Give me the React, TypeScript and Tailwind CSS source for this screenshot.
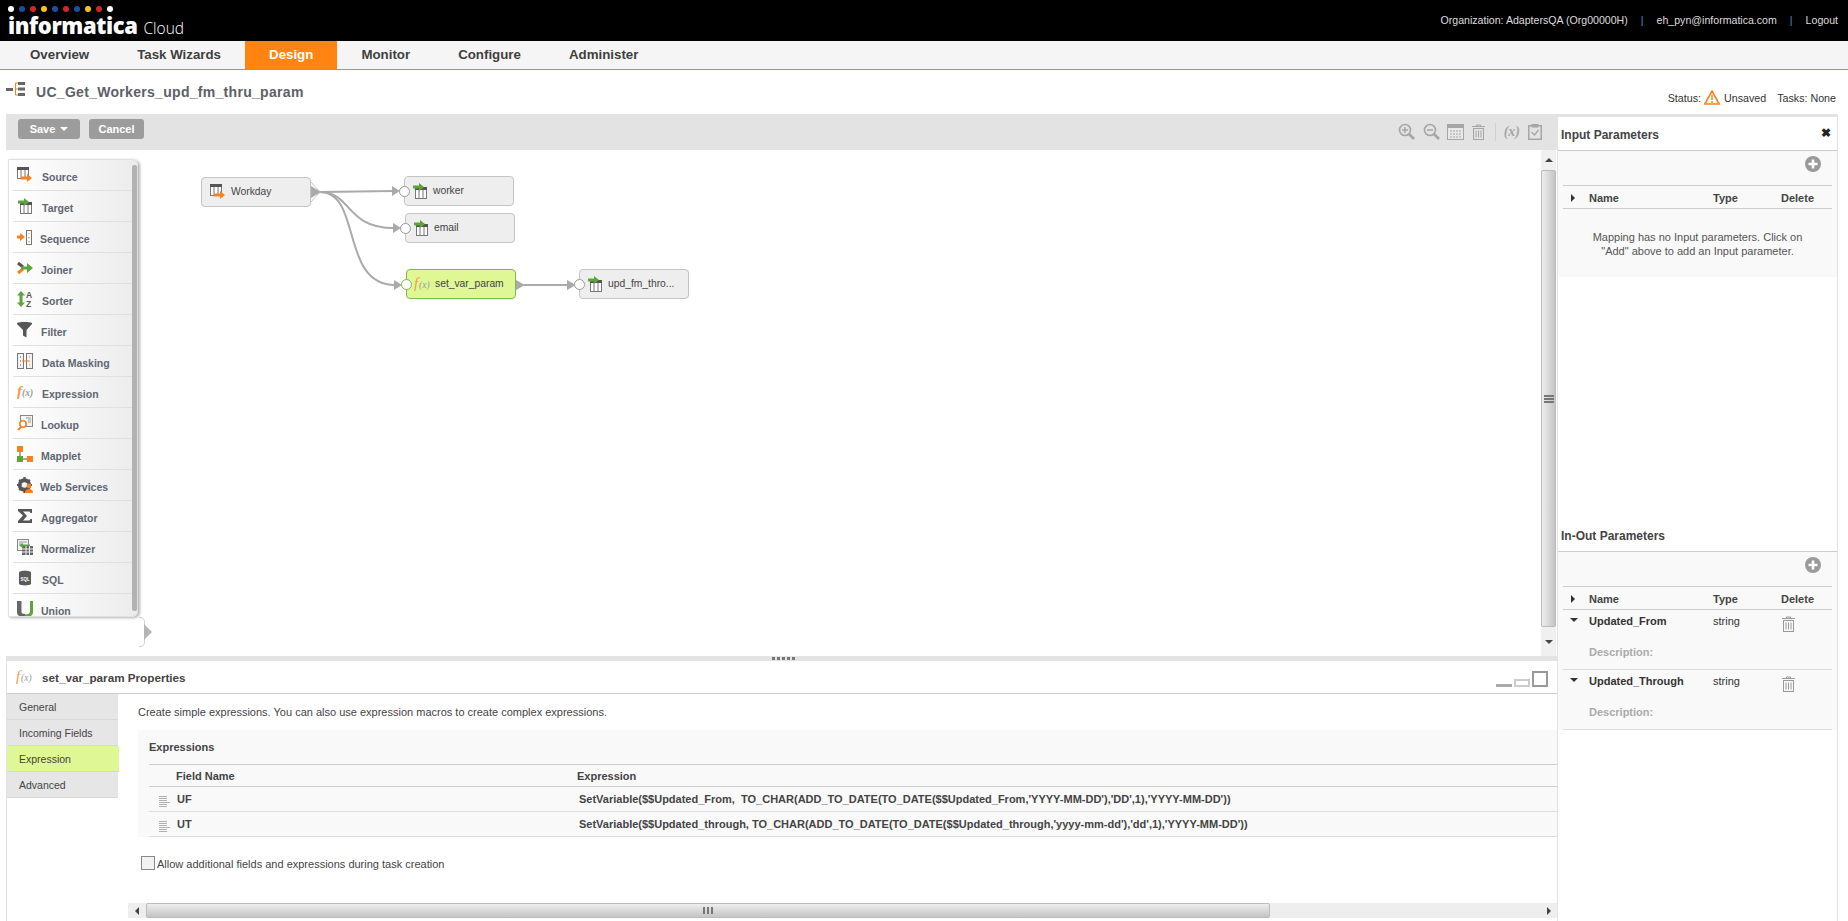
import type { ReactNode } from 'react';

const ORANGE = '#f58220';
const GREEN = '#5da53a';

function TableGrid({ x = 0, y = 0 }: { x?: number; y?: number }) {
  return (
    <g transform={`translate(${x} ${y})`}>
      <rect x="0.5" y="0.5" width="11" height="11" fill="#fff" stroke="#777" />
      <rect x="0" y="0" width="12" height="3" fill="#555" />
      <path d="M4 3v8M8 3v8" stroke="#777" />
    </g>
  );
}

function Arrow({ x, y, color, w = 10 }: { x: number; y: number; color: string; w?: number }) {
  return <path d={`M${x} ${y - 1.5}h${w - 5}v-2.5l5 4-5 4v-2.5h-${w - 5}z`} fill={color} />;
}

function SourceIcon() {
  return (
    <svg width="16" height="16" viewBox="0 0 16 16">
      <TableGrid />
      <Arrow x={4} y={11} color={ORANGE} w={11} />
    </svg>
  );
}

function TargetIcon() {
  return (
    <svg width="16" height="16" viewBox="0 0 16 16">
      <TableGrid x={3} y={4} />
      <Arrow x={1} y={4} color={GREEN} w={11} />
    </svg>
  );
}

function FxIcon({ size = 16 }: { size?: number }) {
  return (
    <svg width={size} height={size} viewBox="0 0 16 16">
      <text x="0" y="12" fontFamily="Liberation Serif, serif" fontStyle="italic" fontSize="15" fill="#f39a4a">f</text>
      <text x="5" y="11.5" fontFamily="Liberation Serif, serif" fontStyle="italic" fontSize="9.5" fill="#999">(x)</text>
    </svg>
  );
}

const paletteItems: { label: string; textLeft: string; icon: ReactNode }[] = [
  { label: 'Source', textLeft: 'ml-[9px]', icon: <SourceIcon /> },
  { label: 'Target', textLeft: 'ml-[9px]', icon: <TargetIcon /> },
  {
    label: 'Sequence',
    textLeft: 'ml-[7px]',
    icon: (
      <svg width="16" height="16" viewBox="0 0 16 16">
        <Arrow x={0} y={8} color={ORANGE} w={8} />
        <rect x="9.5" y="1.5" width="5" height="14" fill="#fff" stroke="#777" />
        <path d="M12 4v1M12 8v1.5M12 12v1.5" stroke={ORANGE} />
      </svg>
    ),
  },
  {
    label: 'Joiner',
    textLeft: 'ml-[8px]',
    icon: (
      <svg width="16" height="16" viewBox="0 0 16 16">
        <path d="M1 3l5 4" stroke="#555" strokeWidth="3" />
        <path d="M1 13l5-4" stroke={ORANGE} strokeWidth="3" />
        <path d="M4 6.500h6V3l6 5-6 5V9.500H4z" fill={GREEN} />
      </svg>
    ),
  },
  {
    label: 'Sorter',
    textLeft: 'ml-[9px]',
    icon: (
      <svg width="16" height="16" viewBox="0 0 16 16">
        <path d="M4 0l4 4.500H5.500v7H8L4 16 0 11.500h2.500v-7H0z" fill={GREEN} />
        <text x="9" y="7" fontFamily="Liberation Sans, sans-serif" fontWeight="700" fontSize="8.500" fill="#555">A</text>
        <text x="9" y="15.500" fontFamily="Liberation Sans, sans-serif" fontWeight="700" fontSize="8.500" fill="#555">Z</text>
      </svg>
    ),
  },
  {
    label: 'Filter',
    textLeft: 'ml-[8px]',
    icon: (
      <svg width="16" height="16" viewBox="0 0 16 16">
        <path d="M0 1c3-1.300 12-1.300 15 0v1L9.500 8v7.500L6 13.500V8L0 2z" fill="#555" />
      </svg>
    ),
  },
  {
    label: 'Data Masking',
    textLeft: 'ml-[9px]',
    icon: (
      <svg width="16" height="16" viewBox="0 0 16 16">
        <rect x="0.5" y="0.5" width="6" height="15" fill="#f2f2f2" stroke="#777" />
        <rect x="9.5" y="0.5" width="6" height="15" fill="#f2f2f2" stroke="#777" />
        <path d="M3 4h1M3 8h1M3 12h1" stroke="#555" />
        <path d="M12 4h1M12 12h1" stroke={ORANGE} />
        <path d="M5 8h8" stroke={ORANGE} />
      </svg>
    ),
  },
  { label: 'Expression', textLeft: 'ml-[9px]', icon: <FxIcon /> },
  {
    label: 'Lookup',
    textLeft: 'ml-[8px]',
    icon: (
      <svg width="16" height="16" viewBox="0 0 16 16">
        <rect x="3.5" y="0.5" width="12" height="11" fill="#f4f4f4" stroke="#888" />
        <path d="M9 3h5M11 5h3M11 7h3" stroke="#999" />
        <circle cx="6" cy="9" r="3.2" fill="#fff" stroke={ORANGE} strokeWidth="1.6" />
        <path d="M4 12l-3 3" stroke={ORANGE} strokeWidth="2" />
      </svg>
    ),
  },
  {
    label: 'Mapplet',
    textLeft: 'ml-[8px]',
    icon: (
      <svg width="16" height="16" viewBox="0 0 16 16">
        <path d="M3 5v8h8" stroke="#555" fill="none" />
        <rect x="0" y="0" width="6" height="6" fill={ORANGE} />
        <rect x="0" y="10" width="6" height="6" fill={GREEN} />
        <rect x="10" y="10" width="6" height="6" fill={ORANGE} />
      </svg>
    ),
  },
  {
    label: 'Web Services',
    textLeft: 'ml-[7px]',
    icon: (
      <svg width="16" height="16" viewBox="0 0 16 16">
        <circle cx="7.5" cy="8" r="5" fill="none" stroke="#555" strokeWidth="3.4" />
        <path d="M7.5 0v16M0 8h15M2.2 2.700l10.600 10.600M12.800 2.700L2.200 13.300" stroke="#555" strokeWidth="2.2" />
        <circle cx="7.500" cy="8" r="2.800" fill="#f4f4f4" />
        <circle cx="12" cy="9" r="2.400" fill={ORANGE} />
        <path d="M8 16c0-3 2-4 4-4s4 1 4 4z" fill={ORANGE} />
      </svg>
    ),
  },
  {
    label: 'Aggregator',
    textLeft: 'ml-[8px]',
    icon: (
      <svg width="16" height="16" viewBox="0 0 16 16">
        <path d="M1 1h14v4h-1.500l-1-1.500H6L10 8l-4 4.500h6.500l1-1.500H15v4H1v-2l5-5.500L1 3z" fill="#555" />
      </svg>
    ),
  },
  {
    label: 'Normalizer',
    textLeft: 'ml-[8px]',
    icon: (
      <svg width="16" height="16" viewBox="0 0 16 16">
        <rect x="0.500" y="0.500" width="11" height="11" fill="#f2f2f2" stroke="#888" />
        <path d="M2 3h8M2 5h3" stroke="#999" />
        <rect x="5" y="7" width="11" height="9" fill="#666" />
        <path d="M5 10h11M5 13h11M9 7v9M12.500 7v9" stroke="#eee" />
        <path d="M13 7H6V9L2 6.500 6 4v1.500h7z" fill={GREEN} />
      </svg>
    ),
  },
  {
    label: 'SQL',
    textLeft: 'ml-[9px]',
    icon: (
      <svg width="16" height="16" viewBox="0 0 16 16">
        <path d="M2 2.500c0-2.500 12-2.500 12 0v11c0 2.500-12 2.500-12 0z" fill="#5a5a5a" />
        <text x="3.500" y="10.500" fontFamily="Liberation Sans, sans-serif" fontWeight="700" fontSize="4.500" fill="#fff">SQL</text>
      </svg>
    ),
  },
  {
    label: 'Union',
    textLeft: 'ml-[8px]',
    icon: (
      <svg width="16" height="16" viewBox="0 0 16 16">
        <path d="M0 0h4.500v11c0 1 1 2 3.500 2v3C3 16 0 15 0 11z" fill="#666" />
        <path d="M16 0h-3v11c0 1.500-2 2.500-5 2.500V16c5 0 8-1 8-5z" fill={GREEN} />
      </svg>
    ),
  },
];

function MagnifierIcon({ plus }: { plus?: boolean }) {
  return (
    <svg width="17" height="17" viewBox="0 0 17 17" fill="none" stroke="#a6a6a6">
      <circle cx="7" cy="7" r="5.500" strokeWidth="1.600" />
      <path d="M11 11l5 5" strokeWidth="2.600" />
      <path d={plus ? 'M4 7h6M7 4v6' : 'M4 7h6'} strokeWidth="1.500" />
    </svg>
  );
}

function TrashIcon({ color = '#a6a6a6', w = 13, h = 16 }: { color?: string; w?: number; h?: number }) {
  return (
    <svg width={w} height={h} viewBox="0 0 13 16" fill="none" stroke={color}>
      <path d="M0 2.500h13M4.500 2.500V1h4v1.500" />
      <rect x="1.500" y="4.500" width="10" height="11" />
      <path d="M4 6.500v7M6.500 6.500v7M9 6.500v7" />
    </svg>
  );
}

function PlusCircle() {
  return (
    <svg width="16" height="16" viewBox="0 0 16 16">
      <circle cx="8" cy="8" r="8" fill="#9a9a9a" />
      <path d="M3.500 8h9M8 3.500v9" stroke="#fff" strokeWidth="2.600" />
    </svg>
  );
}

function CaretRight({ color = '#333' }: { color?: string }) {
  return <div className="h-0 w-0 border-y-[4px] border-l-[4px] border-y-transparent" style={{ borderLeftColor: color }} />;
}

function CaretDown() {
  return <div className="h-0 w-0 border-x-[4px] border-t-[4px] border-x-transparent border-t-[#333]" />;
}

function DiagramNode({ pos, children, active }: { pos: string; children: ReactNode; active?: boolean }) {
  return (
    <div
      className={`absolute flex h-[30px] w-[110px] items-center rounded-[4px] border text-[10.300px] text-[#444] ${pos} ${
        active ? 'border-[#7db84e] bg-[#dff794]' : 'border-[#c4c4c4] bg-[#eeeeee]'
      }`}
    >
      {children}
    </div>
  );
}

function InPort({ active }: { active?: boolean }) {
  return (
    <span
      className={`absolute left-[-6px] top-[9px] h-[11px] w-[11px] rounded-full border bg-white ${
        active ? 'border-[#7db84e]' : 'border-[#999]'
      }`}
    />
  );
}

function Diagram() {
  const line = 'fill-none stroke-[#aaaaaa] stroke-2';
  return (
    <>
      <svg className="absolute left-0 top-0" width="1535" height="506" viewBox="6 150 1535 506">
        <path d="M311 182l9 10-9 10" fill="none" stroke="#ccc" />
        <path d="M311 186l10 6-10 6z" fill="#aaa" />
        <path d="M320 192L394 191" className={line} />
        <path d="M320 192C352 192 345 228 394 228" className={line} />
        <path d="M320 192C362 192 340 285 395 285" className={line} />
        <path d="M392 186l8 5-8 5zM393 223l8 5-8 5zM394 280l8 5-8 5z" fill="#aaa" />
        <path d="M516 280l9 5-9 5z" fill="#aaa" />
        <path d="M524 285H570" className={line} />
        <path d="M567 280l9 5-9 5z" fill="#aaa" />
      </svg>
      <DiagramNode pos="left-[195px] top-[27px]">
        <span className="ml-[8px] flex"><SourceIcon /></span>
        <span className="ml-[5px]">Workday</span>
      </DiagramNode>
      <DiagramNode pos="left-[398px] top-[26px]">
        <InPort />
        <span className="ml-[7px] flex"><TargetIcon /></span>
        <span className="ml-[5px]">worker</span>
      </DiagramNode>
      <DiagramNode pos="left-[399px] top-[63px]">
        <InPort />
        <span className="ml-[7px] flex"><TargetIcon /></span>
        <span className="ml-[5px]">email</span>
      </DiagramNode>
      <DiagramNode active pos="left-[400px] top-[119px]">
        <InPort active />
        <span className="ml-[7px] flex"><FxIcon /></span>
        <span className="ml-[5px]">set_var_param</span>
      </DiagramNode>
      <DiagramNode pos="left-[573px] top-[119px]">
        <InPort />
        <span className="ml-[7px] flex"><TargetIcon /></span>
        <span className="ml-[5px]">upd_fm_thro...</span>
      </DiagramNode>
    </>
  );
}

function Palette() {
  return (
    <div className="absolute left-[2px] top-[9px] z-10 h-[458px] w-[130px] overflow-hidden rounded-r-[6px] border border-[#e0e0e0] bg-gradient-to-r from-white to-[#ececec] shadow-[2px_1px_3px_rgba(0,0,0,0.3)]">
      {paletteItems.map((item) => (
        <div key={item.label} className="ml-[4px] mr-[5px] flex h-[31px] shrink-0 items-center border-b border-[#e0e0e0] pl-[4px] text-[10.500px] font-bold text-[#5f6672]">
          {item.icon}
          <span className={`pt-[6px] ${item.textLeft}`}>{item.label}</span>
        </div>
      ))}
      <div className="absolute right-0 top-[5px] h-[446px] w-[5px] rounded-[2px] bg-[#b2b2b2]" />
    </div>
  );
}

function VScrollbar() {
  return (
    <div className="flex h-full w-[15px] flex-col bg-[#f0f0f0]">
      <div className="flex h-[20px] items-center justify-center">
        <div className="h-0 w-0 border-x-[4px] border-b-[4px] border-x-transparent border-b-[#444]" />
      </div>
      <div className="flex h-[457px] flex-col items-center justify-center gap-px rounded-[2px] border border-[#bbbbbb] bg-gradient-to-r from-[#eeeeee] to-[#c4c4c4]">
        <span className="h-[2px] w-[10px] bg-[#777]" />
        <span className="h-[2px] w-[10px] bg-[#777]" />
        <span className="h-[2px] w-[10px] bg-[#777]" />
      </div>
      <div className="flex flex-1 items-center justify-center">
        <div className="h-0 w-0 border-x-[4px] border-t-[4px] border-x-transparent border-t-[#444]" />
      </div>
    </div>
  );
}

function Canvas() {
  return (
    <div className="relative flex h-[506px] justify-end bg-white">
      <Diagram />
      <Palette />
      <div className="absolute left-[133px] top-[467px] h-[30px] w-[6px] rounded-r-[5px] border-y border-r border-[#d0d0d0] bg-white" />
      <div className="absolute left-[138px] top-[474px] h-0 w-0 border-y-[8px] border-l-[8px] border-y-transparent border-l-[#b5b5b5]" />
      <div className="mr-px h-full">
        <VScrollbar />
      </div>
    </div>
  );
}

function Toolbar() {
  return (
    <div className="flex h-[36px] items-start justify-between bg-[#e3e3e3] pl-[12px] pt-[5px]">
      <div className="flex gap-[9px]">
        <button className="flex h-[20px] w-[62px] items-center justify-center gap-[5px] rounded-[3px] bg-[#9c9c9c] text-[11px] font-bold text-white">
          Save
          <span className="h-0 w-0 border-x-[4px] border-t-[4px] border-x-transparent border-t-white" />
        </button>
        <button className="h-[20px] w-[55px] rounded-[3px] bg-[#9c9c9c] text-[11px] font-bold text-white">Cancel</button>
      </div>
      <div className="flex items-center pr-[15px] pt-[2px]">
        <MagnifierIcon plus />
        <span className="ml-[8px] flex"><MagnifierIcon /></span>
        <svg className="ml-[7px]" width="17" height="16" viewBox="0 0 17 16">
          <rect x="0.500" y="0.500" width="16" height="15" fill="#e8e8e8" stroke="#a6a6a6" />
          <rect x="0" y="0" width="17" height="4" fill="#a6a6a6" />
          <path d="M3 7h11M3 10h11M3 13h11" stroke="#a6a6a6" strokeDasharray="2 1" />
        </svg>
        <span className="ml-[8px] flex"><TrashIcon /></span>
        <span className="ml-[10px] h-[18px] w-px bg-[#cfcfcf]" />
        <span className="ml-[8px] font-['Liberation_Serif',serif] text-[14px] font-bold italic text-[#a6a6a6]">(x)</span>
        <svg className="ml-[8px]" width="14" height="16" viewBox="0 0 14 16" fill="none" stroke="#a6a6a6">
          <rect x="0.750" y="1.750" width="12.500" height="13.500" strokeWidth="1.500" />
          <rect x="4" y="0" width="6" height="3" fill="#a6a6a6" />
          <path d="M3.500 8l3 3 4-5" strokeWidth="1.300" />
        </svg>
      </div>
    </div>
  );
}

const propertyTabs = ['General', 'Incoming Fields', 'Expression', 'Advanced'];

const expressionRows = [
  {
    field: 'UF',
    expr: "SetVariable($$Updated_From,  TO_CHAR(ADD_TO_DATE(TO_DATE($$Updated_From,'YYYY-MM-DD'),'DD',1),'YYYY-MM-DD'))",
  },
  {
    field: 'UT',
    expr: "SetVariable($$Updated_through, TO_CHAR(ADD_TO_DATE(TO_DATE($$Updated_through,'yyyy-mm-dd'),'dd',1),'YYYY-MM-DD'))",
  },
];

function DragHandle() {
  return (
    <svg width="11" height="11" viewBox="0 0 11 11" stroke="#b0b0b0">
      <path d="M0 .500h8M0 2.500h8M0 4.500h8M0 6.500h11M0 8.500h8M0 10.500h8" />
    </svg>
  );
}

function Properties() {
  return (
    <div className="flex min-h-0 flex-1 flex-col border-l border-[#e3e3e3]">
      <div className="flex h-[33px] shrink-0 items-center border-b border-[#cccccc] pl-[9px] pr-[9px]">
        <FxIcon />
        <span className="ml-[10px] pt-[2px] text-[11.700px] font-bold text-[#444]">set_var_param Properties</span>
        <div className="ml-auto flex items-end gap-[2px] pt-[4px]">
          <span className="h-[3px] w-[16px] bg-[#aaaaaa]" />
          <span className="h-[8px] w-[16px] border-2 border-[#cccccc]" />
          <span className="h-[16px] w-[16px] border-2 border-[#999999]" />
        </div>
      </div>
      <div className="flex min-h-0 flex-1">
        <div className="w-[111px] shrink-0">
          {propertyTabs.map((tab) => (
            <div
              key={tab}
              className={`flex h-[26px] items-center border-b border-[#d8d8d8] pl-[12px] pt-[3px] text-[10.500px] text-[#444] ${
                tab === 'Expression' ? 'mr-[-1px] bg-[#dff794]' : 'bg-[#e6e6e6]'
              }`}
            >
              {tab}
            </div>
          ))}
        </div>
        <div className="flex min-w-0 flex-1 flex-col">
          <div className="pl-[20px]">
            <p className="mt-[11px] text-[11px] leading-[14px] text-[#444]">
              Create simple expressions. You can also use expression macros to create complex expressions.
            </p>
            <div className="mt-[11px] h-[107px] bg-[#f9f9f9] pl-[11px]">
              <div className="flex h-[34px] items-center text-[11px] font-bold text-[#444]">Expressions</div>
              <div className="flex h-[23px] items-center border-y border-[#cccccc] pt-[2px] text-[11px] font-bold text-[#444]">
                <span className="ml-[27px] w-[401px]">Field Name</span>
                <span>Expression</span>
              </div>
              {expressionRows.map((row) => (
                <div key={row.field} className="flex h-[25px] items-center border-b border-[#dddddd] pt-px text-[11px] font-bold text-[#444]">
                  <span className="ml-[10px] w-[18px] pt-[3px]"><DragHandle /></span>
                  <span className="w-[402px]">{row.field}</span>
                  <span className="whitespace-pre">{row.expr}</span>
                </div>
              ))}
            </div>
            <label className="mt-[17px] flex items-center text-[11px] text-[#444]">
              <span className="ml-[3px] mr-[2px] h-[14px] w-[14px] border border-[#888] bg-[#f2f2f2]" />
              <span className="pt-[2px]">Allow additional fields and expressions during task creation</span>
            </label>
          </div>
          <div className="mb-[3px] ml-[10px] mt-auto flex h-[15px] items-center bg-[#eeeeee]">
            <div className="flex w-[18px] justify-center">
              <div className="h-0 w-0 border-y-[4px] border-r-[4px] border-y-transparent border-r-[#444]" />
            </div>
            <div className="flex h-full w-[1124px] items-center justify-center rounded-[2px] border border-[#bbbbbb] bg-gradient-to-b from-[#eeeeee] to-[#c4c4c4]">
              <div className="flex h-[7px] w-[10px] justify-between">
                <span className="h-full w-[2px] bg-[#777]" />
                <span className="h-full w-[2px] bg-[#777]" />
                <span className="h-full w-[2px] bg-[#777]" />
              </div>
            </div>
            <div className="ml-auto flex w-[16px] justify-center">
              <CaretRight color="#444" />
            </div>
          </div>
        </div>
      </div>
    </div>
  );
}

function ParamHeader() {
  return (
    <div className="mx-[5px] flex h-[24px] items-center border-y border-[#cccccc] pt-[2px] text-[11px] font-bold text-[#444]">
      <span className="ml-[8px] w-[18px]"><CaretRight /></span>
      <span className="w-[124px]">Name</span>
      <span className="w-[68px]">Type</span>
      <span>Delete</span>
    </div>
  );
}

function ParamRow({ name }: { name: string }) {
  return (
    <div className="mx-[5px] h-[60px] border-b border-[#dddddd] text-[11px]">
      <div className="flex pt-[3px]">
        <span className="ml-[7px] w-[19px] pt-[5px]"><CaretDown /></span>
        <span className="w-[124px] font-bold text-[#333]">{name}</span>
        <span className="w-[69px] text-[#333]">string</span>
        <span className="pt-[3px]"><TrashIcon color="#999" /></span>
      </div>
      <div className="ml-[26px] mt-[12px] font-bold text-[#aaaaaa]">Description:</div>
    </div>
  );
}

function ParamsPanel() {
  return (
    <div className="ml-px mt-[3px] flex w-[280px] flex-col border-r border-[#e3e3e3] bg-white">
      <div className="relative flex h-[34px] shrink-0 items-center border-b border-[#cccccc] pl-[3px] pt-[2px] text-[12px] font-bold text-[#444]">
        Input Parameters
        <span className="absolute right-[6px] top-[7px] text-[12px] text-[#222]">✖</span>
      </div>
      <div className="h-[126px] bg-[#f9f9f9]">
        <div className="flex h-[34px] justify-end pr-[16px] pt-[5px]"><PlusCircle /></div>
        <ParamHeader />
        <p className="mt-[21px] text-center text-[11px] leading-[14px] text-[#555]">
          Mapping has no Input parameters. Click on
          <br />
          "Add" above to add an Input parameter.
        </p>
      </div>
      <div className="mt-[242px] flex h-[33px] shrink-0 items-center border-b border-[#cccccc] pl-[3px] pt-[2px] text-[12px] font-bold text-[#444]">
        In-Out Parameters
      </div>
      <div className="h-[178px] bg-[#f9f9f9]">
        <div className="flex h-[34px] justify-end pr-[16px] pt-[5px]"><PlusCircle /></div>
        <ParamHeader />
        <ParamRow name="Updated_From" />
        <ParamRow name="Updated_Through" />
      </div>
    </div>
  );
}

const navTabs = ['Overview', 'Task Wizards', 'Design', 'Monitor', 'Configure', 'Administer'];
const logoDots = ['#fff', '#1f4ea1', '#d8232a', '#fcc30b', '#1f4ea1', '#d8232a', '#1f4ea1', '#fcc30b', '#d8232a', '#fff'];

export default function App() {
  return (
    <div className="flex h-[921px] w-[1848px] flex-col overflow-hidden bg-white font-['Liberation_Sans',Arial,sans-serif]">
      <header className="flex h-[41px] shrink-0 justify-between bg-black text-white">
        <div className="pl-[8px] pt-[6px]">
          <div className="flex gap-[5px]">
            {logoDots.map((c, i) => (
              <span key={i} className="h-[6px] w-[6px] rounded-full" style={{ backgroundColor: c }} />
            ))}
          </div>
          <div className="mt-[1px] flex items-baseline leading-[24px]">
            <span className="font-['Open_Sans',sans-serif] text-[22px] font-extrabold tracking-[-0.4px]">informatica</span>
            <span className="ml-[6px] font-['Open_Sans',sans-serif] text-[15.500px] font-light">Cloud</span>
          </div>
        </div>
        <div className="flex items-start pr-[10px] pt-[13px] text-[10.600px] leading-[14px] text-[#dddddd]">
          <span>Organization: AdaptersQA (Org00000H)</span>
          <span className="mx-[13px] text-[#4a8fd0]">|</span>
          <span>eh_pyn@informatica.com</span>
          <span className="mx-[13px] text-[#4a8fd0]">|</span>
          <span>Logout</span>
        </div>
      </header>

      <nav className="flex h-[29px] shrink-0 border-b border-[#f58220] bg-[#f5f5f5] pl-[6px]">
        {navTabs.map((tab) => (
          <div
            key={tab}
            className={`flex items-center px-[24px] text-[13.300px] font-bold ${
              tab === 'Design' ? 'bg-[#ff8411] text-white' : 'text-[#3f3f3f]'
            }`}
          >
            {tab}
          </div>
        ))}
      </nav>

      <div className="flex h-[44px] shrink-0">
        <div className="flex items-start pl-[6px] pt-[11px]">
          <svg width="20" height="16" viewBox="0 0 20 16">
            <path d="M0 7h7v3H0z" fill="#666" />
            <path d="M9.500 2v12M9.500 2H12M9.500 8H12M9.500 14H12" stroke={ORANGE} fill="none" />
            <path d="M12 1h7v3h-7zM12 6.500h7v3h-7zM12 12h7v3h-7z" fill="#666" />
          </svg>
          <h1 className="ml-[10px] pt-[2px] text-[14px] font-bold leading-[18px] tracking-[0.3px] text-[#5c6068]">UC_Get_Workers_upd_fm_thru_param</h1>
        </div>
        <div className="ml-auto flex items-center self-end pb-[8px] pr-[12px] text-[10.700px] text-[#333]">
          <span>Status:</span>
          <svg className="ml-[3px]" width="16" height="15" viewBox="0 0 16 15">
            <path d="M8 1l7.200 13H.800z" fill="#fff" stroke={ORANGE} strokeWidth="1.600" />
            <path d="M8 5v5M8 11v2" stroke={ORANGE} strokeWidth="1.400" />
          </svg>
          <span className="ml-[4px]">Unsaved</span>
          <span className="ml-[11px]">Tasks: None</span>
        </div>
      </div>

      <main className="ml-[6px] flex min-h-0 w-[1832px] flex-1 bg-[#e3e3e3]">
        <div className="flex w-[1551px] shrink-0 flex-col bg-white">
          <Toolbar />
          <Canvas />
          <div className="flex h-[5px] shrink-0 items-center gap-[2px] bg-[#e3e3e3] pl-[766px]">
            <span className="h-[3px] w-[3px] bg-[#777]" />
            <span className="h-[3px] w-[3px] bg-[#777]" />
            <span className="h-[3px] w-[3px] bg-[#777]" />
            <span className="h-[3px] w-[3px] bg-[#777]" />
            <span className="h-[3px] w-[3px] bg-[#777]" />
          </div>
          <Properties />
        </div>
        <ParamsPanel />
      </main>
    </div>
  );
}
